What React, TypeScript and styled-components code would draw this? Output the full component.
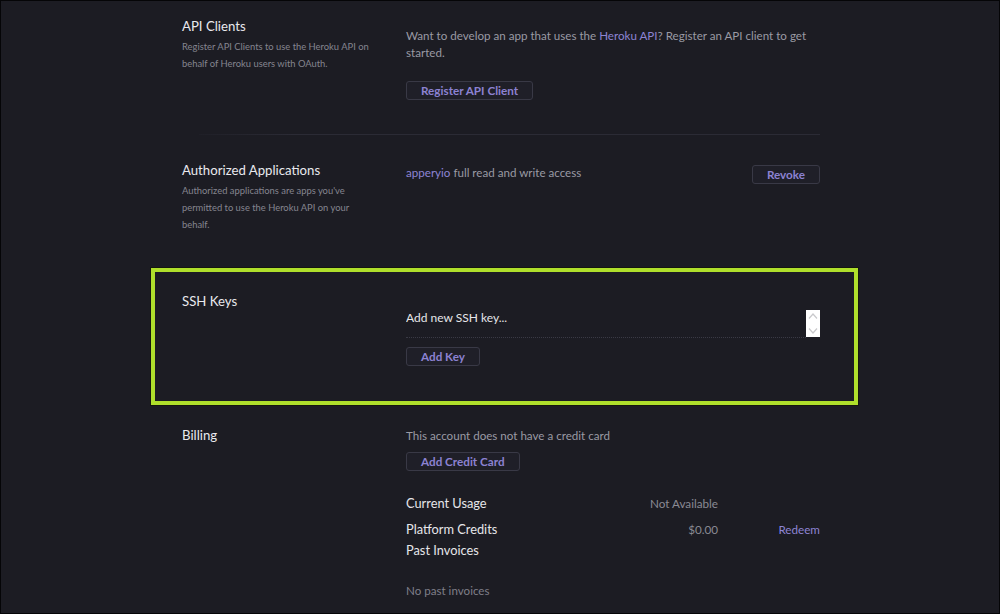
import React from "react";
import styled, { createGlobalStyle, css } from "styled-components";

const GlobalStyle = createGlobalStyle`
  html, body { margin: 0; padding: 0; background: #1c1c23; }
  * { box-sizing: border-box; }
`;

const Frame = styled.div`
  width: 1000px;
  height: 614px;
  overflow: hidden;
  background: #1c1c23;
  border: 1px solid #050507;
  font-family: Lato, "Liberation Sans", Arial, sans-serif;
`;

const Content = styled.div`
  width: 638px;
  margin-left: 181px;
  padding-top: 17px;
  display: flex;
  flex-direction: column;
`;

const Section = styled.section<{ $pt: number; $pb: number; $highlight?: boolean; $mt?: number }>`
  display: grid;
  grid-template-columns: 224px 1fr;
  padding-top: ${(p) => p.$pt}px;
  padding-bottom: ${(p) => p.$pb}px;
  margin-top: ${(p) => p.$mt ?? 0}px;
  ${(p) =>
    p.$highlight &&
    css`
      border: 4px solid #afdf2b;
      box-shadow: 0 0 0 1px #15170f;
      margin-left: -31px;
      margin-right: -38px;
      padding-left: 27px;
      padding-right: 34px;
    `}
`;

const Divider = styled.div`
  height: 1px;
  margin-left: 17px;
  background: linear-gradient(to right, #1f1f27, #2b2b35 15%, #2b2b35);
`;

const LeftCol = styled.div`
  display: flex;
  flex-direction: column;
`;

const Title = styled.h2`
  margin: 0;
  font-size: 13.2px;
  line-height: 16px;
  font-weight: 400;
  color: #e9e9ee;
`;

const Desc = styled.p`
  margin: 4px 0 0;
  width: 190px;
  font-size: 9.4px;
  line-height: 17px;
  color: #85858f;
`;

const RightCol = styled.div<{ $pt: number }>`
  display: flex;
  flex-direction: column;
  align-items: flex-start;
  padding-top: ${(p) => p.$pt}px;
`;

const Text = styled.p`
  margin: 0;
  font-size: 11.6px;
  line-height: 17px;
  color: #9a9aa4;
`;

const Link = styled.a`
  color: #8d84d4;
  text-decoration: none;
`;

const Button = styled.button<{ $mt?: number }>`
  margin-top: ${(p) => p.$mt ?? 0}px;
  height: 19px;
  padding: 0 14px;
  border: 1px solid #393946;
  border-radius: 3px;
  background: #1f1f28;
  color: #8c82d2;
  font-family: Lato, "Liberation Sans", Arial, sans-serif;
  font-weight: 700;
  font-size: 11.7px;
  line-height: 17px;
  cursor: pointer;
`;

const AppRow = styled.div`
  display: flex;
  width: 100%;
  justify-content: space-between;
  align-items: flex-start;
`;

const InputRow = styled.div`
  display: flex;
  width: 100%;
  align-items: flex-start;
`;

const KeyInput = styled.textarea`
  flex: 1;
  height: 28px;
  margin: 0;
  padding: 0;
  border: none;
  border-bottom: 1px dotted #3a3a45;
  background: transparent;
  resize: none;
  overflow: hidden;
  font-family: Lato, "Liberation Sans", Arial, sans-serif;
  font-size: 12px;
  line-height: 16px;
  color: #e6e6ea;
  outline: none;
  &::placeholder {
    color: #e6e6ea;
    opacity: 1;
  }
`;

const ScrollStub = styled.div`
  width: 14px;
  height: 27px;
  background: #ffffff;
  display: flex;
  flex-direction: column;
  align-items: center;
  justify-content: space-between;
  padding: 2px 0;
`;

const UsageTable = styled.div`
  margin-top: 22px;
  width: 100%;
  display: grid;
  grid-template-columns: 1fr 118px 102px;
  grid-template-rows: 26px 21px 21px;
`;

const UsageLabel = styled.div`
  font-size: 12.8px;
  line-height: 21px;
  color: #e6e6ea;
`;

const UsageValue = styled.div<{ $link?: boolean }>`
  font-size: 11.7px;
  line-height: 21px;
  text-align: right;
  color: ${(p) => (p.$link ? "#8d84d4" : "#8a8a94")};
`;

const Empty = styled.p`
  margin: 21px 0 0;
  font-size: 11.6px;
  line-height: 17px;
  color: #7f7f89;
`;

const Chevron = ({ up }: { up?: boolean }) => (
  <svg width="10" height="8" viewBox="0 0 10 8" fill="none">
    <path
      d={up ? "M1 6.5 L5 2 L9 6.5" : "M1 1.5 L5 6 L9 1.5"}
      stroke="#c9c9cc"
      strokeWidth="1.2"
    />
  </svg>
);

export default function App() {
  return (
    <>
      <GlobalStyle />
      <Frame>
        <Content>
          <Section $pt={0} $pb={34}>
            <LeftCol>
              <Title>API Clients</Title>
              <Desc>Register API Clients to use the Heroku API on behalf of Heroku users with OAuth.</Desc>
            </LeftCol>
            <RightCol $pt={9}>
              <Text>
                Want to develop an app that uses the <Link>Heroku API</Link>? Register an API client to get started.
              </Text>
              <Button $mt={20}>Register API Client</Button>
            </RightCol>
          </Section>
          <Divider />
          <Section $pt={27} $pb={35}>
            <LeftCol>
              <Title>Authorized Applications</Title>
              <Desc>Authorized applications are apps you've permitted to use the Heroku API on your behalf.</Desc>
            </LeftCol>
            <RightCol $pt={2}>
              <AppRow>
                <Text>
                  <Link>apperyio</Link> full read and write access
                </Text>
                <Button $mt={1}>Revoke</Button>
              </AppRow>
            </RightCol>
          </Section>
          <Section $pt={21} $pb={35} $highlight>
            <LeftCol>
              <Title>SSH Keys</Title>
            </LeftCol>
            <RightCol $pt={17}>
              <InputRow>
                <KeyInput placeholder="Add new SSH key..." />
                <ScrollStub>
                  <Chevron up />
                  <Chevron />
                </ScrollStub>
              </InputRow>
              <Button $mt={9}>Add Key</Button>
            </RightCol>
          </Section>
          <Section $pt={0} $pb={0} $mt={22}>
            <LeftCol>
              <Title>Billing</Title>
            </LeftCol>
            <RightCol $pt={0}>
              <Text>This account does not have a credit card</Text>
              <Button $mt={8}>Add Credit Card</Button>
              <UsageTable>
                <UsageLabel>Current Usage</UsageLabel>
                <UsageValue>Not Available</UsageValue>
                <UsageValue />
                <UsageLabel>Platform Credits</UsageLabel>
                <UsageValue>$0.00</UsageValue>
                <UsageValue $link>Redeem</UsageValue>
                <UsageLabel>Past Invoices</UsageLabel>
              </UsageTable>
              <Empty>No past invoices</Empty>
            </RightCol>
          </Section>
        </Content>
      </Frame>
    </>
  );
}
